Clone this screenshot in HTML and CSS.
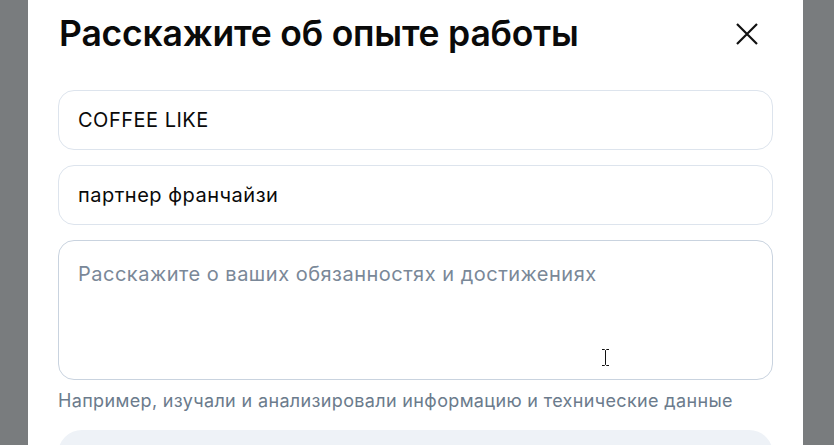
FILE: index.html
```html
<!DOCTYPE html>
<html lang="ru">
<head>
<meta charset="utf-8">
<title>Опыт работы</title>
<link rel="stylesheet" href="styles.css">
</head>
<body>
<div class="overlay">
  <div class="modal">
    <div class="header">
      <h1 class="title">Расскажите об опыте работы</h1>
      <button class="close" aria-label="Закрыть">
        <svg width="22" height="22" viewBox="0 0 22 22"><path d="M1 1L21 21M21 1L1 21" stroke="#111" stroke-width="2.2" fill="none"/></svg>
      </button>
    </div>
    <div class="field">COFFEE LIKE</div>
    <div class="field">партнер франчайзи</div>
    <div class="area">
      <span class="placeholder">Расскажите о ваших обязанностях и достижениях</span>
      <svg class="cursor" width="9" height="17" viewBox="0 0 9 17"><path d="M1 0.5H3.5L4.5 1.5L5.5 0.5H8M4.5 1.5V15.5M1 16.5H3.5L4.5 15.5L5.5 16.5H8" stroke="#111" stroke-width="1" fill="none"/></svg>
    </div>
    <div class="hint">Например, изучали и анализировали информацию и технические данные</div>
    <div class="box"></div>
  </div>
</div>
</body>
</html>
```
FILE: styles.css
```css
html, body {
  margin: 0;
  padding: 0;
  height: 100%;
  overflow: hidden;
}
body {
  background: #797c7e;
  font-family: Inter, "Noto Sans", Arial, sans-serif;
  color: #0a0a0a;
}
.overlay {
  display: flex;
  justify-content: flex-start;
  padding-left: 28px;
}
.modal {
  width: 775px;
  box-sizing: border-box;
  background: #fff;
  border-radius: 24px;
  margin-top: -24px;
  padding: 34px 30px 40px;
  height: 520px;
}
.header {
  display: flex;
  align-items: center;
  justify-content: space-between;
  height: 48px;
  margin-bottom: 32px;
}
.title {
  margin: 0 0 0 1px;
  font-size: 35.5px;
  font-weight: 600;
  letter-spacing: -0.2px;
  line-height: 40px;
}
.close {
  border: 0;
  background: none;
  padding: 0;
  width: 22px;
  height: 22px;
  margin-right: 15px;
  display: flex;
}
.field {
  box-sizing: border-box;
  height: 60px;
  border: 1px solid #dde4ed;
  border-radius: 16px;
  padding: 0 19px;
  display: flex;
  align-items: center;
  font-size: 20px;
  letter-spacing: 0.5px;
  margin-bottom: 15px;
}
.area {
  position: relative;
  box-sizing: border-box;
  height: 140px;
  border: 1px solid #c9d3df;
  border-radius: 16px;
  padding: 21px 19px;
  font-size: 20px;
  letter-spacing: 0.5px;
  line-height: 24px;
}
.placeholder {
  color: #7a8898;
}
.cursor {
  position: absolute;
  left: 542px;
  top: 108px;
}
.hint {
  margin-top: 10px;
  font-size: 18px;
  letter-spacing: 0.35px;
  line-height: 22px;
  color: #6b7b8c;
}
.box {
  margin-top: 18px;
  height: 80px;
  background: #eef2f7;
  border-radius: 24px;
}
```
